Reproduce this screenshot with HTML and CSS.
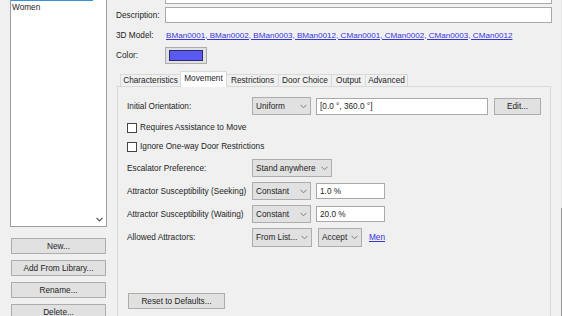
FILE: index.html
```html
<!DOCTYPE html>
<html>
<head>
<meta charset="utf-8">
<link rel="stylesheet" href="styles.css">
</head>
<body>
<div class="app">
  <aside class="side">
    <div class="list">
      <div class="list-items">
        <div class="item selected"></div>
        <div class="item">Women</div>
      </div>
      <div class="list-scroll">
        <svg class="chev dark" width="7" height="5" viewBox="0 0 7 5"><polyline points="0.5,0.8 3.5,3.8 6.5,0.8" fill="none" stroke="#505050" stroke-width="1.2"/></svg>
      </div>
    </div>
    <div class="side-buttons">
      <button class="btn side-btn">New...</button>
      <button class="btn side-btn">Add From Library...</button>
      <button class="btn side-btn">Rename...</button>
      <button class="btn side-btn">Delete...</button>
    </div>
  </aside>

  <main class="main">
    <div class="frow r-name"><span class="flabel"></span><input class="text wide" type="text" value=""></div>
    <div class="frow r-desc"><span class="flabel">Description:</span><input class="text wide" type="text" value=""></div>
    <div class="frow r-model"><span class="flabel">3D Model:</span><a class="link model" href="#">BMan0001, BMan0002, BMan0003, BMan0012, CMan0001, CMan0002, CMan0003, CMan0012</a></div>
    <div class="frow r-color"><span class="flabel">Color:</span><button class="btn colorbtn"><span class="swatch"></span></button></div>

    <div class="tabs">
      <div class="tab w-char">Characteristics</div>
      <div class="tab active w-move">Movement</div>
      <div class="tab w-rest">Restrictions</div>
      <div class="tab w-door">Door Choice</div>
      <div class="tab w-out">Output</div>
      <div class="tab w-adv">Advanced</div>
    </div>

    <div class="panel">
      <div class="prow">
        <span class="plabel">Initial Orientation:</span>
        <div class="select s-59"><span>Uniform</span><svg class="chev" width="7" height="5" viewBox="0 0 7 5"><polyline points="0.5,0.8 3.5,3.8 6.5,0.8" fill="none" stroke="#7a7a7a" stroke-width="1"/></svg></div>
        <input class="text t-orient" type="text" value="[0.0 °, 360.0 °]">
        <button class="btn editbtn">Edit...</button>
      </div>
      <div class="crow first"><span class="cbox"></span><span>Requires Assistance to Move</span></div>
      <div class="crow"><span class="cbox"></span><span>Ignore One-way Door Restrictions</span></div>
      <div class="prow after-check">
        <span class="plabel">Escalator Preference:</span>
        <div class="select s-80"><span>Stand anywhere</span><svg class="chev" width="7" height="5" viewBox="0 0 7 5"><polyline points="0.5,0.8 3.5,3.8 6.5,0.8" fill="none" stroke="#7a7a7a" stroke-width="1"/></svg></div>
      </div>
      <div class="prow gap">
        <span class="plabel">Attractor Susceptibility (Seeking)</span>
        <div class="select s-59"><span>Constant</span><svg class="chev" width="7" height="5" viewBox="0 0 7 5"><polyline points="0.5,0.8 3.5,3.8 6.5,0.8" fill="none" stroke="#7a7a7a" stroke-width="1"/></svg></div>
        <input class="text t-pct" type="text" value="1.0 %">
      </div>
      <div class="prow gap">
        <span class="plabel">Attractor Susceptibility (Waiting)</span>
        <div class="select s-59"><span>Constant</span><svg class="chev" width="7" height="5" viewBox="0 0 7 5"><polyline points="0.5,0.8 3.5,3.8 6.5,0.8" fill="none" stroke="#7a7a7a" stroke-width="1"/></svg></div>
        <input class="text t-pct" type="text" value="20.0 %">
      </div>
      <div class="prow gap tall">
        <span class="plabel">Allowed Attractors:</span>
        <div class="select s-60"><span>From List...</span><svg class="chev" width="7" height="5" viewBox="0 0 7 5"><polyline points="0.5,0.8 3.5,3.8 6.5,0.8" fill="none" stroke="#7a7a7a" stroke-width="1"/></svg></div>
        <div class="select s-44 ml6"><span>Accept</span><svg class="chev" width="7" height="5" viewBox="0 0 7 5"><polyline points="0.5,0.8 3.5,3.8 6.5,0.8" fill="none" stroke="#7a7a7a" stroke-width="1"/></svg></div>
        <a class="link men" href="#">Men</a>
      </div>
      <button class="btn resetbtn">Reset to Defaults...</button>
    </div>
  </main>
  <div class="edge"></div>
</div>
</body>
</html>
```

FILE: styles.css
```css
* { box-sizing: border-box; }
html, body {
  margin: 0;
  padding: 0;
  width: 562px;
  height: 316px;
  overflow: hidden;
  background: #f0f0f0;
}
body {
  font-family: "Liberation Sans", Arial, sans-serif;
  font-size: 8.25px;
  color: #1e1e1e;
}
.app {
  display: flex;
  align-items: flex-start;
  height: 316px;
}

/* left column */
.side {
  width: 107px;
  padding-left: 10px;
  margin-right: 9px;
  display: flex;
  flex-direction: column;
}
.list {
  margin-top: -16px;
  height: 243px;
  border: 1px solid #9c9c9c;
  background: #fff;
  display: flex;
}
.list-items {
  width: 82px;
  display: flex;
  flex-direction: column;
}
.item {
  height: 14px;
  line-height: 14px;
  padding-left: 1px;
  white-space: nowrap;
}
.item.selected {
  height: 16px;
  border: 1px solid #3a8fd9;
  background: #cce8ff;
}
.list-scroll {
  flex: 1;
  display: flex;
  align-items: flex-end;
  justify-content: center;
  padding-bottom: 4px;
}
.chev { display: block; flex: none; }

.side-buttons {
  margin-top: 11px;
  padding: 0 1px;
  display: flex;
  flex-direction: column;
  gap: 6px;
}
.btn {
  font: inherit;
  color: #1e1e1e;
  background: #e1e1e1;
  border: 1px solid #adadad;
  border-radius: 0;
  padding: 0;
  margin: 0;
  display: flex;
  align-items: center;
  justify-content: center;
  white-space: nowrap;
}
.side-btn {
  width: 95px;
  height: 16px;
}

/* main */
.main {
  width: 436px;
  margin-top: -13px;
  display: flex;
  flex-direction: column;
}
.frow {
  display: flex;
  align-items: center;
}
.flabel {
  width: 49px;
  flex: none;
  white-space: nowrap;
}
.text {
  font: inherit;
  color: #1e1e1e;
  background: #fff;
  border: 1px solid #a9a9a9;
  border-radius: 0;
  margin: 0;
  padding: 0 0 0 3px;
  outline: none;
}
.wide { width: 387px; }
.r-name { height: 17px; }
.r-name .text { height: 17px; }
.r-desc { height: 16px; margin-top: 3px; }
.r-desc .text { height: 16px; }
.r-model { height: 16px; margin-top: 4px; }
.link {
  color: #3434d8;
  text-decoration: underline;
  white-space: nowrap;
  padding-left: 1px;
}
.link.model { font-size: 8.1px; }
.r-color { height: 17px; margin-top: 4px; }
.colorbtn {
  width: 42px;
  height: 17px;
}
.swatch {
  display: block;
  width: 34px;
  height: 11px;
  background: #5a5af2;
  border: 1px solid #2b2b6b;
}

/* tabs */
.tabs {
  margin-top: 7px;
  height: 15px;
  padding-left: 4px;
  display: flex;
  align-items: flex-end;
  position: relative;
  z-index: 1;
}
.tab {
  height: 12px;
  border: 1px solid #d9d9d9;
  border-bottom: none;
  border-right: none;
  display: flex;
  align-items: center;
  justify-content: center;
  white-space: nowrap;
  flex: none;
}
.tab.w-adv { border-right: 1px solid #d9d9d9; }
.tab.active {
  height: 16px;
  margin-bottom: -1px;
  background: #fff;
  border-right: 1px solid #d9d9d9;
  padding-bottom: 3px;
}
.tab.active + .tab { border-left: none; }
.w-char { width: 60px; }
.w-move { width: 47px; }
.w-rest { width: 51px; }
.w-door { width: 53px; }
.w-out { width: 34px; }
.w-adv { width: 43px; }

.panel {
  margin: 0 1px;
  height: 240px;
  border: 1px solid #d9d9d9;
  padding: 10px 0 0 9px;
  display: flex;
  flex-direction: column;
  align-items: flex-start;
}
.prow {
  height: 18px;
  display: flex;
  align-items: center;
}
.prow.gap { margin-top: 5px; }
.prow.tall { height: 19px; }
.prow.after-check { margin-top: 3px; }
.plabel {
  width: 125px;
  flex: none;
  white-space: nowrap;
}
.select {
  height: 18px;
  background: #e1e1e1;
  border: 1px solid #adadad;
  display: flex;
  align-items: center;
  justify-content: space-between;
  padding: 0 3px 0 3px;
  flex: none;
  white-space: nowrap;
}
.prow.tall .select { height: 19px; }
.s-59 { width: 59px; }
.s-60 { width: 60px; }
.s-80 { width: 80px; }
.s-44 { width: 44px; }
.ml6 { margin-left: 6px; }
.t-orient {
  width: 172px;
  height: 17px;
  margin-left: 5px;
}
.editbtn {
  width: 47px;
  height: 17px;
  margin-left: 6px;
}
.t-pct {
  width: 69px;
  height: 16px;
  margin-left: 5px;
}
.men { margin-left: 6px; }

.crow {
  height: 19px;
  display: flex;
  align-items: center;
  gap: 3px;
  white-space: nowrap;
}
.crow.first { margin-top: 3px; }
.cbox {
  width: 10px;
  height: 10px;
  border: 1px solid #444;
  background: #fff;
  flex: none;
}
.resetbtn {
  margin-top: 46px;
  margin-left: 1px;
  width: 97px;
  height: 16px;
}

.edge {
  width: 1px;
  height: 316px;
  margin-left: 9px;
  flex: none;
  background: linear-gradient(to bottom, #e4e4e4 0, #e4e4e4 208px, #9c9c9c 208px, #9c9c9c 100%);
}
```
